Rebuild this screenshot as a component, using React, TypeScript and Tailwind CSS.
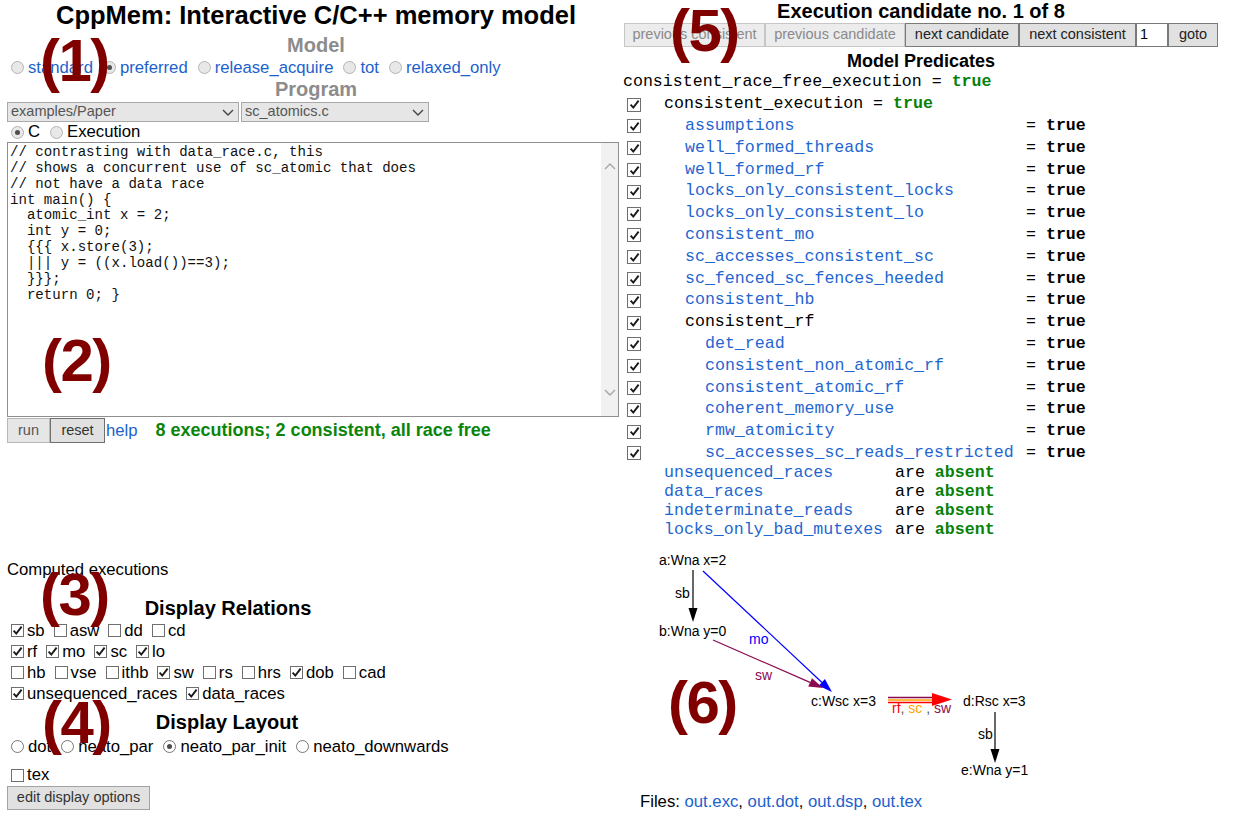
import React from "react";

const LINK = "text-[#1c62cc]";

const CODE = `// contrasting with data_race.c, this
// shows a concurrent use of sc_atomic that does
// not have a data race
int main() {
  atomic_int x = 2;
  int y = 0;
  {{{ x.store(3);
  ||| y = ((x.load())==3);
  }}};
  return 0; }`;

function Box({ checked, big }: { checked?: boolean; big?: boolean }) {
  return (
    <span
      className={`flex shrink-0 items-center justify-center border border-[#6f6f6f] bg-white ${
        big ? "h-[14px] w-[14px]" : "h-[13px] w-[13px]"
      }`}
    >
      {checked && (
        <svg width="11" height="11" viewBox="0 0 11 11">
          <path d="M1.6 5.6 L4.3 8.6 L9.6 1.6" fill="none" stroke="#1a1a1a" strokeWidth="1.9" />
        </svg>
      )}
    </span>
  );
}

function Radio({ checked, light }: { checked?: boolean; light?: boolean }) {
  return (
    <span
      className={`flex h-[13px] w-[13px] shrink-0 items-center justify-center rounded-full border ${
        light ? "border-[#767676] bg-white" : "border-[#b3b3b3] bg-[#e8e8e8]"
      }`}
    >
      {checked && <span className="h-[5px] w-[5px] rounded-full bg-[#4d4d4d]" />}
    </span>
  );
}

function Opt({ label, checked, radio, light, link }: { label: string; checked?: boolean; radio?: boolean; light?: boolean; link?: boolean }) {
  return (
    <span className="flex items-center">
      {radio ? <Radio checked={checked} light={light} /> : <Box checked={checked} />}
      <span className={`${radio ? "ml-[4px]" : "ml-[3px]"} ${link ? LINK : "text-black"}`}>{label}</span>
    </span>
  );
}

function Chevron({ up, color = "#444" }: { up?: boolean; color?: string }) {
  return (
    <svg width="12" height="7" viewBox="0 0 12 7">
      <polyline points={up ? "1,6 6,1 11,6" : "1,1 6,6 11,1"} fill="none" stroke={color} strokeWidth="1.4" />
    </svg>
  );
}

function Select({ label, width }: { label: string; width: string }) {
  return (
    <div className={`flex h-[20px] items-center justify-between border border-[#a9a9a9] bg-[#e6e6e6] pl-[3px] pr-[4px] text-[14.5px] text-[#555] ${width}`}>
      <span>{label}</span>
      <Chevron />
    </div>
  );
}

const LEVEL1 = [
  "assumptions",
  "well_formed_threads",
  "well_formed_rf",
  "locks_only_consistent_locks",
  "locks_only_consistent_lo",
  "consistent_mo",
  "sc_accesses_consistent_sc",
  "sc_fenced_sc_fences_heeded",
  "consistent_hb",
];

const LEVEL2 = ["det_read", "consistent_non_atomic_rf", "consistent_atomic_rf", "coherent_memory_use", "rmw_atomicity", "sc_accesses_sc_reads_restricted"];

const ABSENT = ["unsequenced_races", "data_races", "indeterminate_reads", "locks_only_bad_mutexes"];

function PredRow({ name, pad, plain }: { name: string; pad: string; plain?: boolean }) {
  return (
    <div className="flex h-[21.8px] items-center">
      <span className="ml-[4px] mr-[23px]">
        <Box checked big />
      </span>
      <span className={`w-[362px] ${pad} ${plain ? "text-black" : "text-[#1f66d1]"}`}>{name}</span>
      <span>= </span>
      <span className="font-bold">true</span>
    </div>
  );
}

function Graph() {
  const f = "Liberation Sans, Arial, sans-serif";
  return (
    <svg width="628" height="250" viewBox="0 0 628 250" className="block" fontFamily={f} fontSize="14">
      {/* sb a -> b */}
      <line x1="73" y1="30" x2="73" y2="70" stroke="#000" strokeWidth="1.2" />
      <polygon points="68.5,68 77.5,68 73,82" fill="#000" />
      <text x="55" y="58">sb</text>
      {/* mo a -> c */}
      <line x1="83" y1="31" x2="202" y2="142.5" stroke="#0000ff" strokeWidth="1.2" />
      <polygon points="198.7,145.7 204.9,139.1 212,152" fill="#0000ff" />
      <text x="129" y="104" fill="#0000ff">mo</text>
      {/* sw b -> c */}
      <line x1="93" y1="100" x2="190" y2="142.4" stroke="#8b0a50" strokeWidth="1.2" />
      <polygon points="188.2,146.6 192,138.3 203,148" fill="#8b0a50" />
      <text x="135" y="140" fill="#8b0a50">sw</text>
      {/* rf, sc, sw c -> d */}
      <line x1="268" y1="157.5" x2="314" y2="157.5" stroke="#8b0a50" strokeWidth="1.5" />
      <line x1="268" y1="160" x2="314" y2="160" stroke="#ffa500" strokeWidth="1.5" />
      <line x1="268" y1="162.5" x2="314" y2="162.5" stroke="#ff0000" strokeWidth="1.5" />
      <polygon points="312,153 312,166 332,159.5" fill="#ff0000" />
      <text x="272" y="173">
        <tspan fill="#ff0000">rf</tspan>
        <tspan fill="#555">, </tspan>
        <tspan fill="#ffa500">sc</tspan>
        <tspan fill="#555"> , </tspan>
        <tspan fill="#8b0a50">sw</tspan>
      </text>
      {/* sb d -> e */}
      <line x1="375" y1="172" x2="375" y2="211" stroke="#000" strokeWidth="1.2" />
      <polygon points="370.5,209 379.5,209 375,223" fill="#000" />
      <text x="358" y="199">sb</text>
      {/* nodes */}
      <text x="39" y="25">a:Wna x=2</text>
      <text x="39" y="96">b:Wna y=0</text>
      <text x="191" y="166">c:Wsc x=3</text>
      <text x="343" y="166">d:Rsc x=3</text>
      <text x="341" y="235">e:Wna y=1</text>
    </svg>
  );
}

const TAG = "absolute text-[60px] font-bold leading-[60px] tracking-[-1.5px] text-[#800000]";

export default function App() {
  return (
    <div className="relative h-[822px] w-[1248px] overflow-hidden bg-white font-['Liberation_Sans',Arial,sans-serif] text-black">
      <div className="flex">
        {/* left column */}
        <div className="w-[620px] shrink-0">
          <h1 className="pl-[12px] text-center text-[25.5px] font-bold leading-[30px]">CppMem: Interactive C/C++ memory model</h1>
          <div className="mt-[3px] pl-[12px] text-center text-[20px] font-bold leading-[24px] text-[#8c8c8c]">Model</div>
          <div className="flex h-[21px] items-center gap-[10px] pl-[11px] text-[16.7px]">
            <Opt radio link label="standard" />
            <Opt radio link checked label="preferred" />
            <Opt radio link label="release_acquire" />
            <Opt radio link label="tot" />
            <Opt radio link label="relaxed_only" />
          </div>
          <div className="pl-[12px] text-center text-[20px] font-bold leading-[22px] text-[#8c8c8c]">Program</div>
          <div className="mt-[2px] flex gap-[2px] pl-[7px]">
            <Select label="examples/Paper" width="w-[232px]" />
            <Select label="sc_atomics.c" width="w-[188px]" />
          </div>
          <div className="flex h-[20px] items-center gap-[10px] pl-[11px] text-[16.7px]">
            <Opt radio checked label="C" />
            <Opt radio label="Execution" />
          </div>
          <div className="ml-[7px] flex h-[275px] w-[612px] border border-[#8f8f8f] bg-white">
            <pre className="flex-1 pl-[2px] pt-[2px] font-['Liberation_Mono','Courier_New',monospace] text-[14.1px] leading-[15.85px] text-[#111]">{CODE}</pre>
            <div className="flex w-[17px] flex-col items-center justify-between bg-[#f1f1f1] py-[20px]">
              <Chevron up color="#a6a6a6" />
              <Chevron color="#a6a6a6" />
            </div>
          </div>
          <div className="mt-[1px] flex h-[25px] items-center pl-[7px]">
            <button className="h-[25px] w-[43px] border border-[#b8b8b8] bg-[#e6e6e6] text-[14.5px] text-[#555]">run</button>
            <button className="h-[25px] w-[55px] border border-[#707070] bg-[#e1e1e1] text-[14.5px] text-[#333]">reset</button>
            <span className={`ml-[1px] text-[16.7px] ${LINK}`}>help</span>
            <span className="ml-[18px] text-[18px] font-bold text-[#0a850a]">8 executions; 2 consistent, all race free</span>
          </div>

          <div className="mt-[117px] pl-[7px] text-[16.7px] leading-[20px]">Computed executions</div>
          <div className="mt-[16px] w-[456px] text-center text-[20px] font-bold leading-[24px]">Display Relations</div>
          <div className="text-[16.7px]">
            <div className="flex h-[21px] items-center gap-[9px] pl-[11px]">
              <Opt checked label="sb" />
              <Opt label="asw" />
              <Opt label="dd" />
              <Opt label="cd" />
            </div>
            <div className="flex h-[21px] items-center gap-[9px] pl-[11px]">
              <Opt checked label="rf" />
              <Opt checked label="mo" />
              <Opt checked label="sc" />
              <Opt checked label="lo" />
            </div>
            <div className="flex h-[21px] items-center gap-[9px] pl-[11px]">
              <Opt label="hb" />
              <Opt label="vse" />
              <Opt label="ithb" />
              <Opt checked label="sw" />
              <Opt label="rs" />
              <Opt label="hrs" />
              <Opt checked label="dob" />
              <Opt label="cad" />
            </div>
            <div className="flex h-[21px] items-center gap-[9px] pl-[11px]">
              <Opt checked label="unsequenced_races" />
              <Opt checked label="data_races" />
            </div>
          </div>
          <div className="mt-[6px] w-[454px] text-center text-[20px] font-bold leading-[24px]">Display Layout</div>
          <div className="mt-[2px] flex h-[21px] items-center gap-[10px] pl-[11px] text-[16.7px]">
            <Opt radio light label="dot" />
            <Opt radio light label="neato_par" />
            <Opt radio light checked label="neato_par_init" />
            <Opt radio light label="neato_downwards" />
          </div>
          <div className="mt-[8px] flex h-[20px] items-center pl-[11px] text-[16.7px]">
            <Opt label="tex" />
          </div>
          <button className="ml-[7px] h-[24px] w-[143px] border border-[#a3a3a3] bg-[#e1e1e1] text-[14.5px] text-[#333]">edit display options</button>
        </div>

        {/* right column */}
        <div className="w-[628px] shrink-0">
          <div className="w-[602px] text-center text-[20px] font-bold leading-[23px]">Execution candidate no. 1 of 8</div>
          <div className="flex h-[24px] pl-[4px] text-[14.5px]">
            <button className="w-[141px] border border-[#c6c6c6] bg-[#ececec] text-[#8a8a8a]">previous consistent</button>
            <button className="w-[140px] border border-[#c6c6c6] bg-[#ececec] text-[#8a8a8a]">previous candidate</button>
            <button className="w-[114px] border border-[#7a7a7a] bg-[#e1e1e1] text-[#222]">next candidate</button>
            <button className="w-[117px] border border-[#7a7a7a] bg-[#e1e1e1] text-[#222]">next consistent</button>
            <div className="flex w-[32px] items-center border border-[#7a7a7a] bg-white pl-[3px] text-black">1</div>
            <button className="w-[50px] border border-[#7a7a7a] bg-[#e1e1e1] text-[#222]">goto</button>
          </div>
          <div className="mt-[3px] w-[602px] text-center text-[18px] font-bold leading-[22px]">Model Predicates</div>
          <div className="whitespace-pre pl-[3px] font-['Liberation_Mono','Courier_New',monospace] text-[16.6px]">
            <div className="flex h-[21.8px] items-center">
              <span>consistent_race_free_execution = </span>
              <span className="font-bold text-[#078107]">true</span>
            </div>
            <div className="flex h-[21.8px] items-center">
              <span className="ml-[4px] mr-[23px]">
                <Box checked big />
              </span>
              <span>consistent_execution = </span>
              <span className="font-bold text-[#078107]">true</span>
            </div>
            {LEVEL1.map((name) => (
              <PredRow key={name} name={name} pad="pl-[21px]" />
            ))}
            <PredRow name="consistent_rf" pad="pl-[21px]" plain />
            {LEVEL2.map((name) => (
              <PredRow key={name} name={name} pad="pl-[41px]" />
            ))}
            {ABSENT.map((name) => (
              <div key={name} className="flex h-[19px] items-center pl-[41px]">
                <span className="w-[231px] text-[#1f66d1]">{name}</span>
                <span>are </span>
                <span className="font-bold text-[#078107]">absent</span>
              </div>
            ))}
          </div>
          <Graph />
          <div className="mt-[1px] pl-[20px] text-[16.7px] leading-[22px]">
            Files: <span className={LINK}>out.exc</span>, <span className={LINK}>out.dot</span>, <span className={LINK}>out.dsp</span>,{" "}
            <span className={LINK}>out.tex</span>
          </div>
        </div>
      </div>

      {/* section markers laid over the page */}
      <div className={`${TAG} left-[40px] top-[31px]`}>(1)</div>
      <div className={`${TAG} left-[42px] top-[331px]`}>(2)</div>
      <div className={`${TAG} left-[40px] top-[565px]`}>(3)</div>
      <div className={`${TAG} left-[42px] top-[693px]`}>(4)</div>
      <div className={`${TAG} left-[670px] top-[1px]`}>(5)</div>
      <div className={`${TAG} left-[668px] top-[673px]`}>(6)</div>
    </div>
  );
}
